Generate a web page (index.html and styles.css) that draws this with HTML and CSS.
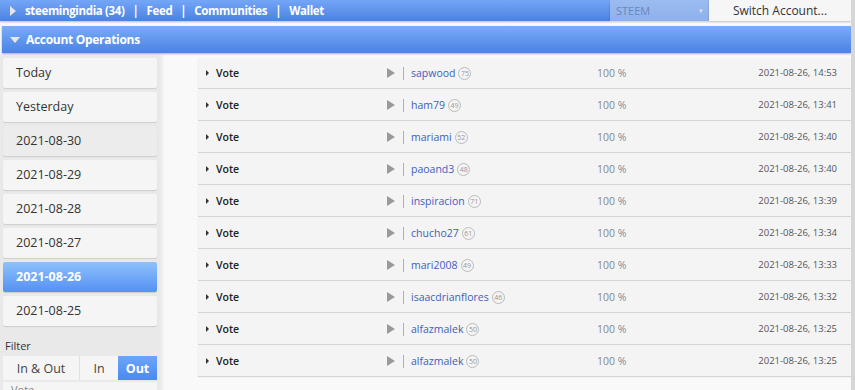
FILE: index.html
```html
<!DOCTYPE html>
<html lang="en">

<head>
    <meta charset="UTF-8">
    <meta name="viewport" content="width=device-width, initial-scale=1.0">
    <title>Account Operations</title>
    <link rel="stylesheet" href="styles.css">
</head>

<body>
    <header class="topbar">
        <nav class="topnav">
            <span class="tri-right"></span>
            <a>steemingindia (34)</a><span class="sep">|</span>
            <a>Feed</a><span class="sep">|</span>
            <a>Communities</a><span class="sep">|</span>
            <a>Wallet</a>
        </nav>
        <div class="chain">STEEM <span class="caret">&#9662;</span></div>
        <button class="switch">Switch Account...</button>
    </header>

    <div class="panel-head">
        <span class="tri-down"></span>Account Operations
    </div>

    <section class="layout">
        <aside class="side">
            <ul class="days">
                <li>Today</li>
                <li>Yesterday</li>
                <li class="dim">2021-08-30</li>
                <li>2021-08-29</li>
                <li>2021-08-28</li>
                <li>2021-08-27</li>
                <li class="active">2021-08-26</li>
                <li>2021-08-25</li>
            </ul>
            <div class="filter-label">Filter</div>
            <div class="filter">
                <span class="f-both">In &amp; Out</span>
                <span class="f-in">In</span>
                <span class="f-out">Out</span>
            </div>
            <div class="more">Vote</div>
        </aside>

        <article class="ops">
            <div class="op">
                <span class="kind"><i class="arrow"></i>Vote</span>
                <span class="who"><i class="play"></i><b class="bar"></b><a>sapwood</a><em>75</em></span>
                <span class="pct">100 %</span>
                <span class="time">2021-08-26, 14:53</span>
            </div>
            <div class="op">
                <span class="kind"><i class="arrow"></i>Vote</span>
                <span class="who"><i class="play"></i><b class="bar"></b><a>ham79</a><em>49</em></span>
                <span class="pct">100 %</span>
                <span class="time">2021-08-26, 13:41</span>
            </div>
            <div class="op">
                <span class="kind"><i class="arrow"></i>Vote</span>
                <span class="who"><i class="play"></i><b class="bar"></b><a>mariami</a><em>52</em></span>
                <span class="pct">100 %</span>
                <span class="time">2021-08-26, 13:40</span>
            </div>
            <div class="op">
                <span class="kind"><i class="arrow"></i>Vote</span>
                <span class="who"><i class="play"></i><b class="bar"></b><a>paoand3</a><em>48</em></span>
                <span class="pct">100 %</span>
                <span class="time">2021-08-26, 13:40</span>
            </div>
            <div class="op">
                <span class="kind"><i class="arrow"></i>Vote</span>
                <span class="who"><i class="play"></i><b class="bar"></b><a>inspiracion</a><em>71</em></span>
                <span class="pct">100 %</span>
                <span class="time">2021-08-26, 13:39</span>
            </div>
            <div class="op">
                <span class="kind"><i class="arrow"></i>Vote</span>
                <span class="who"><i class="play"></i><b class="bar"></b><a>chucho27</a><em>61</em></span>
                <span class="pct">100 %</span>
                <span class="time">2021-08-26, 13:34</span>
            </div>
            <div class="op">
                <span class="kind"><i class="arrow"></i>Vote</span>
                <span class="who"><i class="play"></i><b class="bar"></b><a>mari2008</a><em>49</em></span>
                <span class="pct">100 %</span>
                <span class="time">2021-08-26, 13:33</span>
            </div>
            <div class="op">
                <span class="kind"><i class="arrow"></i>Vote</span>
                <span class="who"><i class="play"></i><b class="bar"></b><a>isaacdrianflores</a><em>46</em></span>
                <span class="pct">100 %</span>
                <span class="time">2021-08-26, 13:32</span>
            </div>
            <div class="op">
                <span class="kind"><i class="arrow"></i>Vote</span>
                <span class="who"><i class="play"></i><b class="bar"></b><a>alfazmalek</a><em>50</em></span>
                <span class="pct">100 %</span>
                <span class="time">2021-08-26, 13:25</span>
            </div>
            <div class="op">
                <span class="kind"><i class="arrow"></i>Vote</span>
                <span class="who"><i class="play"></i><b class="bar"></b><a>alfazmalek</a><em>50</em></span>
                <span class="pct">100 %</span>
                <span class="time">2021-08-26, 13:25</span>
            </div>
        </article>
    </section>
</body>

</html>
```

FILE: styles.css
```css
html,
body {
    margin: 0;
    height: 100%;
    overflow: hidden;
}

body {
    background-color: #f9f9f9;
    font-family: "Open Sans", "Liberation Sans", sans-serif;
    color: #333;
    border-right: 4px solid #d6d6d6;
    box-sizing: border-box;
}

/* top navigation */
.topbar {
    display: flex;
    align-items: stretch;
    height: 21px;
    background-color: #f4f4f4;
}

.topnav {
    flex: 1;
    display: flex;
    align-items: center;
    padding-left: 10px;
    background: linear-gradient(#74a6f8, #4b81e0);
    color: #fff;
    font-size: 11.5px;
    font-weight: 700;
    letter-spacing: -0.35px;
    box-shadow: 0 1px 2px rgba(0, 0, 0, 0.25);
}

.tri-right {
    width: 0;
    height: 0;
    border-top: 5px solid transparent;
    border-bottom: 5px solid transparent;
    border-left: 6px solid #e6e6e6;
    margin-right: 9px;
}

.sep {
    margin: 0 8px;
}

.chain {
    width: 87px;
    padding: 0 6px;
    display: flex;
    align-items: center;
    justify-content: space-between;
    background: linear-gradient(#9bbcf0, #8fb1ec);
    color: #6a86bc;
    font-size: 11px;
    box-shadow: 0 1px 2px rgba(0, 0, 0, 0.2);
}

.caret {
    font-size: 7px;
    color: #d8e4f8;
}

.switch {
    width: 142px;
    border: 0;
    background-color: #f6f6f6;
    font-family: inherit;
    font-size: 12px;
    color: #333;
    padding: 0;
    box-shadow: 0 1px 2px rgba(0, 0, 0, 0.25);
}

/* panel header */
.panel-head {
    margin: 5px 0 0 2px;
    height: 27px;
    display: flex;
    align-items: center;
    padding-left: 8px;
    background: linear-gradient(#79acfb, #4b82e3);
    color: #fff;
    font-size: 12px;
    font-weight: 700;
    letter-spacing: -0.3px;
    box-shadow: 0 1px 2px rgba(0, 0, 0, 0.3);
}

.tri-down {
    width: 0;
    height: 0;
    border-left: 5px solid transparent;
    border-right: 5px solid transparent;
    border-top: 6px solid #e8e8e8;
    margin-right: 6px;
}

/* body layout */
.layout {
    display: flex;
    gap: 38px;
    margin-top: 2px;
}

.side {
    width: 160px;
    flex-shrink: 0;
    background-color: #e9e9e9;
    padding: 3px 3px 0 3px;
    box-sizing: border-box;
    box-shadow: 2px 0 4px rgba(0, 0, 0, 0.08);
    height: 340px;
}

.days {
    list-style: none;
    margin: 0;
    padding: 0;
    display: flex;
    flex-direction: column;
    gap: 4px;
}

.days li {
    height: 30px;
    line-height: 30px;
    padding-left: 13px;
    background-color: #f5f5f5;
    border-radius: 2px;
    font-size: 12.5px;
    color: #333;
    box-shadow: 0 1px 1px rgba(0, 0, 0, 0.12);
}

.days li.dim {
    background-color: #ececec;
}

.days li.active {
    background: linear-gradient(#8ec2fb, #5590f4);
    color: #fff;
    font-weight: 700;
}

.filter-label {
    margin-top: 13px;
    padding-left: 2px;
    font-size: 11px;
    color: #333;
    height: 13px;
    line-height: 13px;
}

.filter {
    display: flex;
    margin-top: 4px;
    height: 24px;
    font-size: 12.5px;
}

.filter span {
    display: flex;
    align-items: center;
    justify-content: center;
    background-color: #f5f5f5;
    color: #444;
}

.f-both {
    width: 76px;
    border-right: 1px solid #e0e0e0;
}

.f-in {
    width: 38px;
}

.f-out {
    flex: 1;
    background: linear-gradient(#6ba6fb, #4c88f0) !important;
    color: #fff !important;
    font-weight: 700;
}

.more {
    margin-top: 2px;
    height: 24px;
    line-height: 16px;
    background-color: #f5f5f5;
    font-size: 11px;
    padding-left: 8px;
    color: #888;
}

/* operations list */
.ops {
    flex: 1;
    padding-top: 3px;
    display: flex;
    flex-direction: column;
    gap: 2px;
}

.op {
    height: 30px;
    display: flex;
    align-items: center;
    background-color: #f4f4f4;
    box-shadow: 0 1px 1px rgba(0, 0, 0, 0.14);
    font-size: 10.5px;
}

.kind {
    width: 181px;
    display: flex;
    align-items: center;
    padding-left: 8px;
    color: #222;
    font-weight: 600;
}

.arrow {
    width: 0;
    height: 0;
    border-top: 3px solid transparent;
    border-bottom: 3px solid transparent;
    border-left: 3px solid #333;
    margin-right: 7px;
}

.who {
    width: 210px;
    display: flex;
    align-items: center;
}

.play {
    width: 0;
    height: 0;
    border-top: 5px solid transparent;
    border-bottom: 5px solid transparent;
    border-left: 8px solid #9a9a9a;
    margin-right: 8px;
}

.bar {
    width: 1px;
    height: 13px;
    background-color: #d2a58f;
    margin-right: 7px;
}

.who a {
    color: #3e60c0;
}

.who em {
    font-style: normal;
    font-size: 7px;
    color: #999;
    border: 1px solid #bbb;
    border-radius: 50%;
    width: 11px;
    height: 11px;
    display: inline-flex;
    align-items: center;
    justify-content: center;
    margin-left: 3px;
}

.pct {
    flex: 1;
    color: #888;
}

.time {
    padding-right: 14px;
    font-size: 9.5px;
    color: #555;
    align-self: flex-start;
    margin-top: 8px;
}
```
